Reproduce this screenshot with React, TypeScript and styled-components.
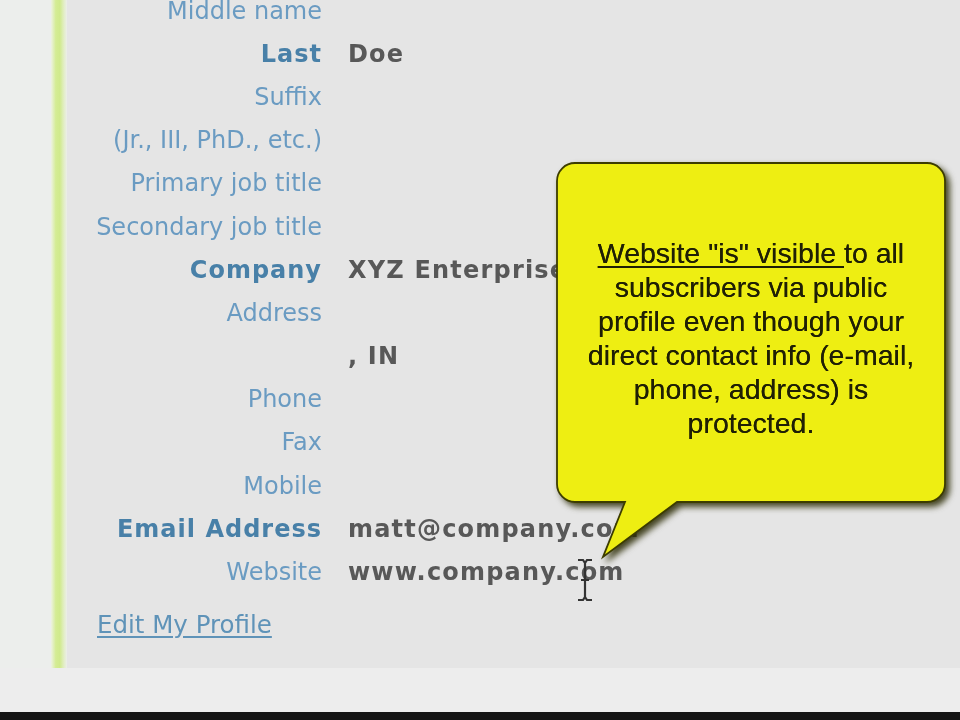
import styled, { createGlobalStyle } from "styled-components";

const GlobalStyle = createGlobalStyle`
  html, body {
    margin: 0;
    padding: 0;
    background: #e6e6e6;
    overflow: hidden;
  }
`;

type Row = {
  label: string;
  value?: string;
  strong?: boolean;
};

const rows: Row[] = [
  { label: "Middle name" },
  { label: "Last", value: "Doe", strong: true },
  { label: "Suffix" },
  { label: "(Jr., III, PhD., etc.)" },
  { label: "Primary job title" },
  { label: "Secondary job title" },
  { label: "Company", value: "XYZ Enterprises", strong: true },
  { label: "Address" },
  { label: "", value: ", IN" },
  { label: "Phone" },
  { label: "Fax" },
  { label: "Mobile" },
  { label: "Email Address", value: "matt@company.com", strong: true },
  { label: "Website", value: "www.company.com" },
];

const App = () => {
  return (
    <Page>
      <GlobalStyle />
      <Main>
        <Gutter />
        <Stripe />
        <Panel>
          <Details>
            {rows.map((row, i) => (
              <DetailRow key={i}>
                <Label strong={row.strong}>{row.label}</Label>
                <Value>{row.value}</Value>
              </DetailRow>
            ))}
          </Details>
          <EditLink href="#">Edit My Profile</EditLink>

          <Callout>
            <CalloutShape width="388" height="400" viewBox="0 0 388 400">
              <path
                d="M18,0 H370 A18,18 0 0 1 388,18 V321 A18,18 0 0 1 370,339 H120 L46,394 L68,339 H18 A18,18 0 0 1 0,321 V18 A18,18 0 0 1 18,0 Z"
                fill="#eeee12"
                stroke="#3c3c00"
                strokeWidth="1.8"
              />
            </CalloutShape>
            <CalloutText>
              <Underlined>Website "is" visible </Underlined>to all
              <br />
              subscribers via public
              <br />
              profile even though your
              <br />
              direct contact info (e-mail,
              <br />
              phone, address) is
              <br />
              protected.
            </CalloutText>
          </Callout>

          <Cursor width="20" height="44" viewBox="0 0 20 44">
            <path
              d="M3,2 H8 L10,5 L12,2 H17 M10,5 V39 M3,42 H8 L10,39 L12,42 H17 M6,22 H14"
              fill="none"
              stroke="#333"
              strokeWidth="2.2"
            />
          </Cursor>
        </Panel>
      </Main>
      <BottomStrip />
      <BlackBar />
    </Page>
  );
};

export default App;

const Page = styled.div`
  width: 960px;
  height: 720px;
  display: flex;
  flex-direction: column;
  overflow: hidden;
  filter: blur(0.45px);
`;

const Main = styled.div`
  flex: 1;
  display: flex;
  min-height: 0;
`;

const Gutter = styled.div`
  width: 51px;
  background: #eceeec;
`;

const Stripe = styled.div`
  width: 16px;
  background: linear-gradient(
    to right,
    #eef2e4 0%,
    #d4ec94 30%,
    #d0ea8c 55%,
    #e2eec4 80%,
    #eceeea 100%
  );
`;

const Panel = styled.div`
  flex: 1;
  position: relative;
  background: #e5e5e5;
  padding-left: 29px;
  overflow: hidden;
`;

const Details = styled.div`
  margin-top: -11px;
  margin-left: -29px;
  display: flex;
  flex-direction: column;
`;

const DetailRow = styled.div`
  height: 43.2px;
  display: grid;
  grid-template-columns: 255px 1fr;
  column-gap: 26px;
  align-items: center;
`;

const Label = styled.div<{ strong?: boolean }>`
  text-align: right;
  font-family: "DejaVu Sans", Verdana, sans-serif;
  font-size: 24px;
  white-space: nowrap;
  font-weight: ${(p) => (p.strong ? 700 : 400)};
  letter-spacing: ${(p) => (p.strong ? "1px" : "0")};
  color: ${(p) => (p.strong ? "#4880a8" : "#6a9bc2")};
`;

const Value = styled.div`
  font-family: "DejaVu Sans", Verdana, sans-serif;
  font-size: 24px;
  font-weight: 700;
  letter-spacing: 1.2px;
  white-space: nowrap;
  color: #585858;
`;

const EditLink = styled.a`
  display: inline-block;
  margin-top: 16px;
  margin-left: 1px;
  font-family: "DejaVu Sans", Verdana, sans-serif;
  font-size: 24.5px;
  line-height: 30px;
  color: #5f93b8;
  text-decoration: underline;
  text-underline-offset: 3px;
`;

const Callout = styled.div`
  position: absolute;
  left: 490px;
  top: 163px;
  width: 388px;
  height: 339px;
  display: flex;
  align-items: center;
  justify-content: center;
`;

const CalloutShape = styled.svg`
  position: absolute;
  left: 0;
  top: 0;
  overflow: visible;
  filter: drop-shadow(4px 4px 3px rgba(40, 40, 0, 0.85));
`;

const CalloutText = styled.div`
  position: relative;
  margin-top: 10px;
  text-align: center;
  font-family: "Liberation Sans", Arial, sans-serif;
  font-size: 28.5px;
  line-height: 34px;
  color: #1f1f05;
  text-shadow: 0 0 0.6px #1f1f05;
`;

const Underlined = styled.span`
  text-decoration: underline;
  text-underline-offset: 3px;
  text-decoration-thickness: 1.5px;
`;

const Cursor = styled.svg`
  position: absolute;
  left: 508px;
  top: 558px;
`;

const BottomStrip = styled.div`
  height: 44px;
  background: #ededed;
`;

const BlackBar = styled.div`
  height: 8px;
  background: #151515;
`;
